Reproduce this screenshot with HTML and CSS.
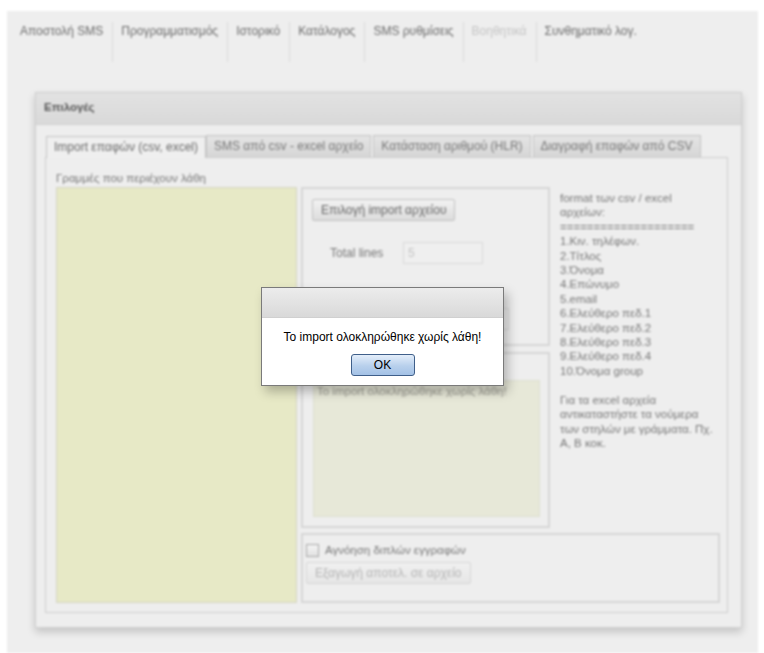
FILE: index.html
```html
<html>
<head>
  <meta charset="UTF-8">
  <title>SMS - Import επαφών</title>
  <link rel="stylesheet" href="styles.css">
</head>
<body>
  <div class="page">
    <ul class="menu">
      <li>Αποστολή SMS</li>
      <li>Προγραμματισμός</li>
      <li>Ιστορικό</li>
      <li>Κατάλογος</li>
      <li>SMS ρυθμίσεις</li>
      <li class="off">Βοηθητικά</li>
      <li>Συνθηματικό λογ.</li>
    </ul>

    <div class="panel">
      <div class="panel-head">Επιλογές</div>
      <div class="panel-body">
        <div class="tabs">
          <div class="tab active">Import επαφών (csv, excel)</div>
          <div class="tab">SMS από csv - excel αρχείο</div>
          <div class="tab">Κατάσταση αριθμού (HLR)</div>
          <div class="tab">Διαγραφή επαφών από CSV</div>
        </div>
        <div class="tab-content">
          <div class="err-label">Γραμμές που περιέχουν λάθη</div>
          <div class="err-area"></div>

          <div class="mid">
            <div class="box box-import">
              <button class="btn">Επιλογή import αρχείου</button>
              <div class="field">
                <span class="field-label">Total lines</span>
                <span class="input">5</span>
              </div>
              <div class="field">
                <span class="field-label"></span>
                <span class="input wide"></span>
              </div>
            </div>
            <div class="box box-result">
              <div class="result-area">Το import ολοκληρώθηκε χωρίς λάθη!</div>
            </div>
          </div>

          <div class="help">
            format των csv / excel<br>
            αρχείων:<br>
            ====================<br>
            1.Κιν. τηλέφων.<br>
            2.Τίτλος<br>
            3.Όνομα<br>
            4.Επώνυμο<br>
            5.email<br>
            6.Ελεύθερο πεδ.1<br>
            7.Ελεύθερο πεδ.2<br>
            8.Ελεύθερο πεδ.3<br>
            9.Ελεύθερο πεδ.4<br>
            10.Όνομα group<br>
            <br>
            Για τα excel αρχεία<br>
            αντικαταστήστε τα νούμερα<br>
            των στηλών με γράμματα. Πχ.<br>
            Α, Β κοκ.
          </div>

          <div class="box box-options">
            <label class="check"><span class="checkbox"></span>Αγνόηση διπλών εγγραφών</label>
            <button class="btn disabled">Εξαγωγή αποτελ. σε αρχείο</button>
          </div>
        </div>
      </div>
    </div>
  </div>

  <div class="dialog">
    <div class="dialog-title"></div>
    <div class="dialog-body">
      <p>Το import ολοκληρώθηκε χωρίς λάθη!</p>
      <button class="ok">OK</button>
    </div>
  </div>
</body>
</html>
```

FILE: styles.css
```css
html, body {
  margin: 0;
  height: 100%;
  background: #fff;
  overflow: hidden;
}
body {
  font-family: "Liberation Sans", Arial, sans-serif;
  font-size: 12px;
  color: #666;
}

.page {
  margin: 11px 6px 0 7px;
  height: 642px;
  background: #eeeeee;
  filter: blur(0.85px);
}

.menu {
  list-style: none;
  margin: 0;
  padding: 11px 0 0 0;
  display: flex;
  height: 40px;
}
.menu li {
  padding: 2px 9px 0 8px;
  height: 38px;
  border-left: 1px solid #dadada;
  color: #6a6a6a;
  line-height: 14px;
  font-size: 12px;
}
.menu li:first-child {
  border-left: 0;
  padding-left: 13px;
}
.menu li.off {
  color: #c4c4c4;
}

.panel {
  margin: 30px 0 0 28px;
  width: 705px;
  height: 534px;
  border: 1px solid #cfcfcf;
  background: #eeeeee;
  box-shadow: 0 4px 8px rgba(0, 0, 0, .18);
}
.panel-head {
  height: 31px;
  line-height: 29px;
  padding-left: 8px;
  background: linear-gradient(#e2e2e2, #d9d9d9);
  border-bottom: 1px solid #d0d0d0;
  color: #555;
  font-weight: bold;
  font-size: 11.5px;
}
.panel-body {
  padding: 10px 0 0 9px;
}

.tabs {
  display: flex;
  gap: 2px;
  padding-left: 1px;
  height: 22px;
}
.tab {
  height: 21px;
  line-height: 21px;
  padding: 0 7px;
  border: 1px solid #c4c4c4;
  border-bottom: 0;
  background: linear-gradient(#e4e4e4, #d6d6d6);
  color: #777;
  font-size: 12px;
}
.tab.active {
  background: #efefef;
  color: #6a6a6a;
  position: relative;
  top: 1px;
  margin-right: -2px;
}

.tab-content {
  width: 671px;
  height: 441px;
  border: 1px solid #cdcdcd;
  padding: 13px 0 0 10px;
  display: grid;
  grid-template-columns: 241px 249px 166px;
  grid-template-rows: 16px 346px 70px;
  column-gap: 4px;
  row-gap: 0;
}

.err-label {
  grid-column: 1 / 4;
  color: #777;
  font-size: 11.5px;
  line-height: 14px;
}
.err-area {
  grid-row: 2 / 4;
  grid-column: 1;
  background: #e7e9c6;
  border: 1px solid #d4d4c4;
  height: 414px;
}

.mid {
  grid-row: 2;
  grid-column: 2;
  display: flex;
  flex-direction: column;
  gap: 6px;
}
.box {
  border: 2px solid #d6d6d6;
  box-sizing: border-box;
}
.box-import {
  height: 159px;
  padding: 10px 0 0 9px;
}
.box-result {
  height: 176px;
  padding: 26px 8px 0 10px;
}
.result-area {
  height: 127px;
  background: #e7e8d8;
  border: 1px solid #dedfd0;
  padding: 4px 3px;
  color: #a0a096;
  font-size: 11.5px;
}

.btn {
  font-family: inherit;
  font-size: 12px;
  color: #666;
  height: 22px;
  padding: 0 8px;
  border: 1px solid #c2c2c2;
  border-radius: 2px;
  background: linear-gradient(#f2f2f2, #dcdcdc);
}
.btn.disabled {
  color: #b4b4b4;
  border-color: #d6d6d6;
  background: linear-gradient(#f0f0f0, #e6e6e6);
}

.field {
  display: flex;
  align-items: center;
  margin-top: 21px;
}
.field + .field {
  margin-top: 44px;
}
.field-label {
  width: 73px;
  padding-left: 18px;
  color: #777;
}
.input {
  width: 74px;
  height: 20px;
  line-height: 20px;
  padding-left: 4px;
  border: 1px solid #d9d9d9;
  background: #efefef;
  color: #c4c4c4;
}
.input.wide {
  width: 100px;
}

.help {
  grid-row: 2;
  grid-column: 3;
  padding: 4px 0 0 6px;
  font-size: 11.5px;
  line-height: 14.4px;
  color: #777;
}

.box-options {
  grid-row: 3;
  grid-column: 2 / 4;
  height: 70px;
  padding: 7px 4px 0 3px;
}
.check {
  display: flex;
  align-items: center;
  gap: 6px;
  height: 16px;
  color: #777;
  font-size: 11.5px;
}
.checkbox {
  width: 11px;
  height: 11px;
  border: 1px solid #a8a8a8;
  background: linear-gradient(#f4f4f4, #e2e2e2);
}
.box-options .btn {
  margin-top: 4px;
}

.dialog {
  position: absolute;
  left: 261px;
  top: 287px;
  width: 241px;
  height: 97px;
  border: 1px solid #7a7a7a;
  background: #fff;
  box-shadow: 4px 6px 10px rgba(0, 0, 0, .25);
}
.dialog-title {
  height: 29px;
  background: linear-gradient(#ececec, #d9d9d9);
  border-bottom: 1px solid #d0d0d0;
}
.dialog-body {
  text-align: center;
}
.dialog-body p {
  margin: 12px 0 0 0;
  color: #000;
  font-size: 12px;
  line-height: 14px;
}
.ok {
  margin-top: 10px;
  width: 64px;
  height: 22px;
  font-family: inherit;
  font-size: 12px;
  color: #000;
  border: 1px solid #3f5f8a;
  border-radius: 3px;
  background: linear-gradient(#e4eefa, #b8d0ec 55%, #a4c2e6);
}
```
